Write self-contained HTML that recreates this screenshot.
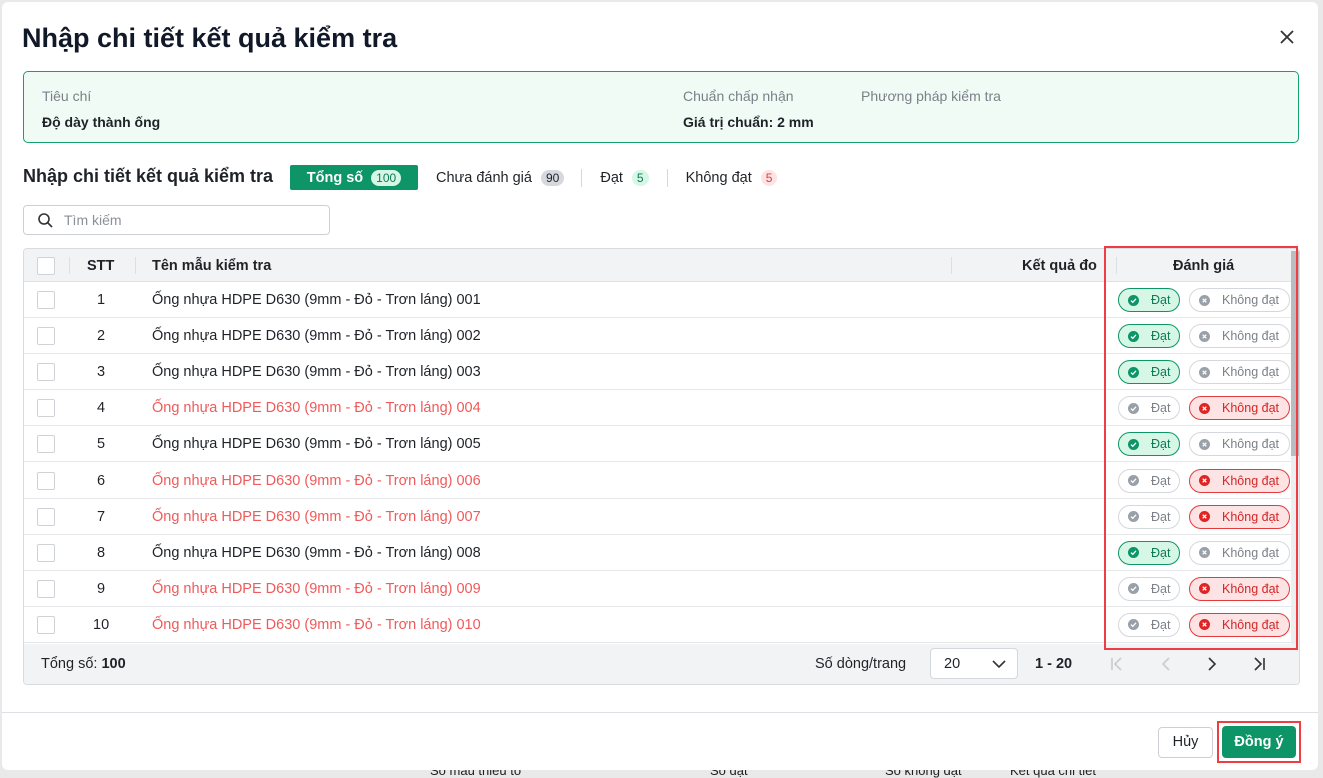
<!DOCTYPE html>
<html><head><meta charset="utf-8"><style>
*{box-sizing:border-box;margin:0;padding:0}
body{width:1323px;height:774px;background:#e9e9e9;font-family:"Liberation Sans",sans-serif;color:#1f2328;position:relative;overflow:hidden}
.bgtext{position:absolute;top:763px;font-size:13px;color:#222}
.modal{position:absolute;left:2px;top:2px;width:1316px;height:768px;background:#fff;border-radius:6px}
.abs{position:absolute}
h1{position:absolute;left:20px;top:21px;font-size:27px;font-weight:bold;color:#111827}
.close{position:absolute;left:1280px;top:28px}
.info{position:absolute;left:21px;top:70px;width:1276px;height:72px;border:1px solid #16a06e;border-radius:5px;background:#f1fbf6}
.lbl{font-size:14px;color:#7b8088;position:absolute}
.val{font-size:14px;font-weight:bold;color:#1f2328;position:absolute}
.tabs{position:absolute;top:163px;left:288px;height:25px;display:flex;align-items:center;font-size:14.5px}
.tab1{background:#0d9467;color:#fff;font-weight:bold;height:25px;width:128px;border-radius:2px;display:flex;align-items:center;justify-content:center;gap:8px}
.badge{border-radius:10px;padding:1px 5px;font-size:12px;font-weight:normal}
.search{position:absolute;left:21px;top:203px;width:307px;height:30px;border:1px solid #ccd0d5;border-radius:4px;font-size:14px;color:#8a9098}
.table{position:absolute;left:21px;top:246px;width:1277px;height:437px;border:1px solid #d8dbe0;border-radius:4px;overflow:hidden}
.thead{position:absolute;left:0;top:0;width:100%;height:33px;background:#f2f3f5;border-bottom:1px solid #dfe2e6;font-size:14.5px;font-weight:bold}
.row{position:absolute;left:0;width:100%;height:36px;border-bottom:1px solid #e5e7ea;font-size:14.5px}
.cb{position:absolute;left:13px;width:18px;height:18px;border:1px solid #cfd3d8;border-radius:2px;background:#fff}
.sep{position:absolute;top:8px;width:1px;height:17px;background:#dcdfe3}
.pill{position:absolute;height:24px;border-radius:12px;font-size:12.5px;display:flex;align-items:center;padding-left:9px}
.ic{width:11px;height:11px;border-radius:50%;display:inline-block;margin-right:12px;position:relative}
.ic svg{position:absolute;left:2px;top:2px}
.ok{background:#d6f6e6;border:1px solid #0d9467;color:#0d7a55}
.ok .ic{background:#0d9467}
.no{background:#fde3e3;border:1px solid #e23b3b;color:#d32626}
.no .ic{background:#e02424}
.off{background:#fff;border:1px solid #d4d7dc;color:#7b8088}
.off .ic{background:#9aa0a8}
.foot{position:absolute;left:0;top:395px;width:100%;height:41px;background:#f2f3f5;font-size:14.5px}
.scroll{position:absolute;left:1267px;top:0;width:8px;height:395px;background:#eceef0}
.thumb{position:absolute;left:1267px;top:2px;width:8px;height:205px;background:#b9bcc1}
.red{color:#f05a5a}
</style></head><body>
<div class="bgtext" style="left:430px">Số mẫu thiếu to</div>
<div class="bgtext" style="left:710px">Số đạt</div>
<div class="bgtext" style="left:885px">Số không đạt</div>
<div class="bgtext" style="left:1010px">Kết quả chi tiết</div>
<div class="modal">
<h1>Nhập chi tiết kết quả kiểm tra</h1>
<svg class="close" width="14" height="14" viewBox="0 0 14 14" style="left:1278px;top:28px"><path d="M1 1L13 13M13 1L1 13" stroke="#333" stroke-width="1.8"/></svg>
<div class="info" style="left:21px;top:69px">
<div class="lbl" style="left:18px;top:16px">Tiêu chí</div>
<div class="val" style="left:18px;top:42px">Độ dày thành ống</div>
<div class="lbl" style="left:659px;top:16px">Chuẩn chấp nhận</div>
<div class="val" style="left:659px;top:42px">Giá trị chuẩn: 2 mm</div>
<div class="lbl" style="left:837px;top:16px">Phương pháp kiểm tra</div>
</div>
<div class="abs" style="left:21px;top:164px;font-size:18px;font-weight:bold;color:#1f2328">Nhập chi tiết kết quả kiểm tra</div>
<div class="tabs">
<div class="tab1">Tổng số <span class="badge" style="background:#d6f6e6;color:#0d7a55">100</span></div>
<span style="margin-left:18px">Chưa đánh giá</span><span class="badge" style="background:#d5d8dd;margin-left:9px">90</span>
<span style="width:1px;height:18px;background:#d4d7dc;margin:0 18px 0 17px"></span>
<span>Đạt</span><span class="badge" style="background:#d6f6e6;color:#0d7a55;margin-left:9px">5</span>
<span style="width:1px;height:18px;background:#d4d7dc;margin:0 18px 0 18px"></span>
<span>Không đạt</span><span class="badge" style="background:#fde3e3;color:#e23b3b;margin-left:9px">5</span>
</div>
<div class="search"><svg class="abs" style="left:14px;top:7px" width="15" height="15" viewBox="0 0 15 15"><circle cx="6" cy="6" r="5" fill="none" stroke="#333" stroke-width="1.6"/><path d="M9.5 9.5L14 14" stroke="#333" stroke-width="1.6"/></svg><span class="abs" style="left:40px;top:6px">Tìm kiếm</span></div>
<div class="table">
<div class="thead">
<div class="cb" style="top:8px"></div>
<div class="sep" style="left:45px"></div>
<div class="abs" style="left:63px;top:9px">STT</div>
<div class="sep" style="left:111px"></div>
<div class="abs" style="left:128px;top:9px">Tên mẫu kiểm tra</div>
<div class="sep" style="left:927px"></div>
<div class="abs" style="left:998px;top:9px">Kết quả đo</div>
<div class="sep" style="left:1092px"></div>
<div class="abs" style="left:1149px;top:9px">Đánh giá</div>
</div>
<div id="rows"></div>
<div class="scroll"></div><div class="thumb"></div>
<div class="foot">
<div class="abs" style="left:17px;top:12px">Tổng số: <b>100</b></div>
<div class="abs" style="left:791px;top:12px">Số dòng/trang</div>
<div class="abs" style="left:906px;top:4px;width:88px;height:31px;border:1px solid #d4d7dc;border-radius:4px;background:#fff"><span class="abs" style="left:13px;top:7px">20</span><svg class="abs" style="left:61px;top:11px" width="14" height="9" viewBox="0 0 14 9"><path d="M1 1L7 7L13 1" fill="none" stroke="#333" stroke-width="1.6"/></svg></div>
<div class="abs" style="left:1011px;top:12px;font-weight:bold">1 - 20</div>
<svg class="abs" style="left:1086px;top:13px" width="14" height="14" viewBox="0 0 14 14"><path d="M2 1V13M11 1L5 7L11 13" fill="none" stroke="#c8cbd0" stroke-width="1.6"/></svg>
<svg class="abs" style="left:1135px;top:13px" width="14" height="14" viewBox="0 0 14 14"><path d="M10 1L4 7L10 13" fill="none" stroke="#c8cbd0" stroke-width="1.6"/></svg>
<svg class="abs" style="left:1181px;top:13px" width="14" height="14" viewBox="0 0 14 14"><path d="M4 1L10 7L4 13" fill="none" stroke="#333" stroke-width="1.6"/></svg>
<svg class="abs" style="left:1228px;top:13px" width="14" height="14" viewBox="0 0 14 14"><path d="M3 1L9 7L3 13M12 1V13" fill="none" stroke="#333" stroke-width="1.6"/></svg>
</div>
</div>
<div class="abs" style="left:1102px;top:244px;width:194px;height:404px;border:2px solid #ef3e43"></div>
<div class="abs" style="left:0;top:710px;width:1316px;height:1px;background:#dcdfe3"></div>
<div class="abs" style="left:1156px;top:725px;width:55px;height:31px;border:1px solid #ccd0d5;border-radius:4px;font-size:14.5px;text-align:center;line-height:29px">Hủy</div>
<div class="abs" style="left:1215px;top:719px;width:84px;height:42px;border:2px solid #ef3e43"></div>
<div class="abs" style="left:1220px;top:724px;width:74px;height:32px;background:#0d9467;border-radius:4px;color:#fff;font-weight:bold;font-size:14.5px;text-align:center;line-height:32px">Đồng ý</div>
</div>
<script>
var st=[1,1,1,0,1,0,0,1,0,0],h='';
var ck='<svg width="7" height="7" viewBox="0 0 7 7"><path d="M1 3.6L2.8 5.3L6 1.8" fill="none" stroke="#fff" stroke-width="1.3"/></svg>';
var xx='<svg width="7" height="7" viewBox="0 0 7 7"><path d="M1.7 1.7L5.3 5.3M5.3 1.7L1.7 5.3" stroke="#fff" stroke-width="1.3"/></svg>';
for(var i=0;i<10;i++){var t=33+i*36.1,ok=st[i];
var n=(i+1<10?'00':'0')+(i+1);
h+='<div class="row" style="top:'+t+'px"><div class="cb" style="top:9px"></div><div class="abs" style="left:'+(i==9?69:73)+'px;top:10px">'+(i+1)+'</div><div class="abs'+(ok?'':' red')+'" style="left:128px;top:10px">Ống nhựa HDPE D630 (9mm - Đỏ - Trơn láng) '+n+'</div>'+
'<div class="pill '+(ok?'ok':'off')+'" style="left:1094px;top:6px;width:62px"><span class="ic">'+ck+'</span>Đạt</div>'+
'<div class="pill '+(ok?'off':'no')+'" style="left:1165px;top:6px;width:101px"><span class="ic">'+xx+'</span>Không đạt</div></div>';}
document.getElementById('rows').innerHTML=h;
</script>
</body></html>
